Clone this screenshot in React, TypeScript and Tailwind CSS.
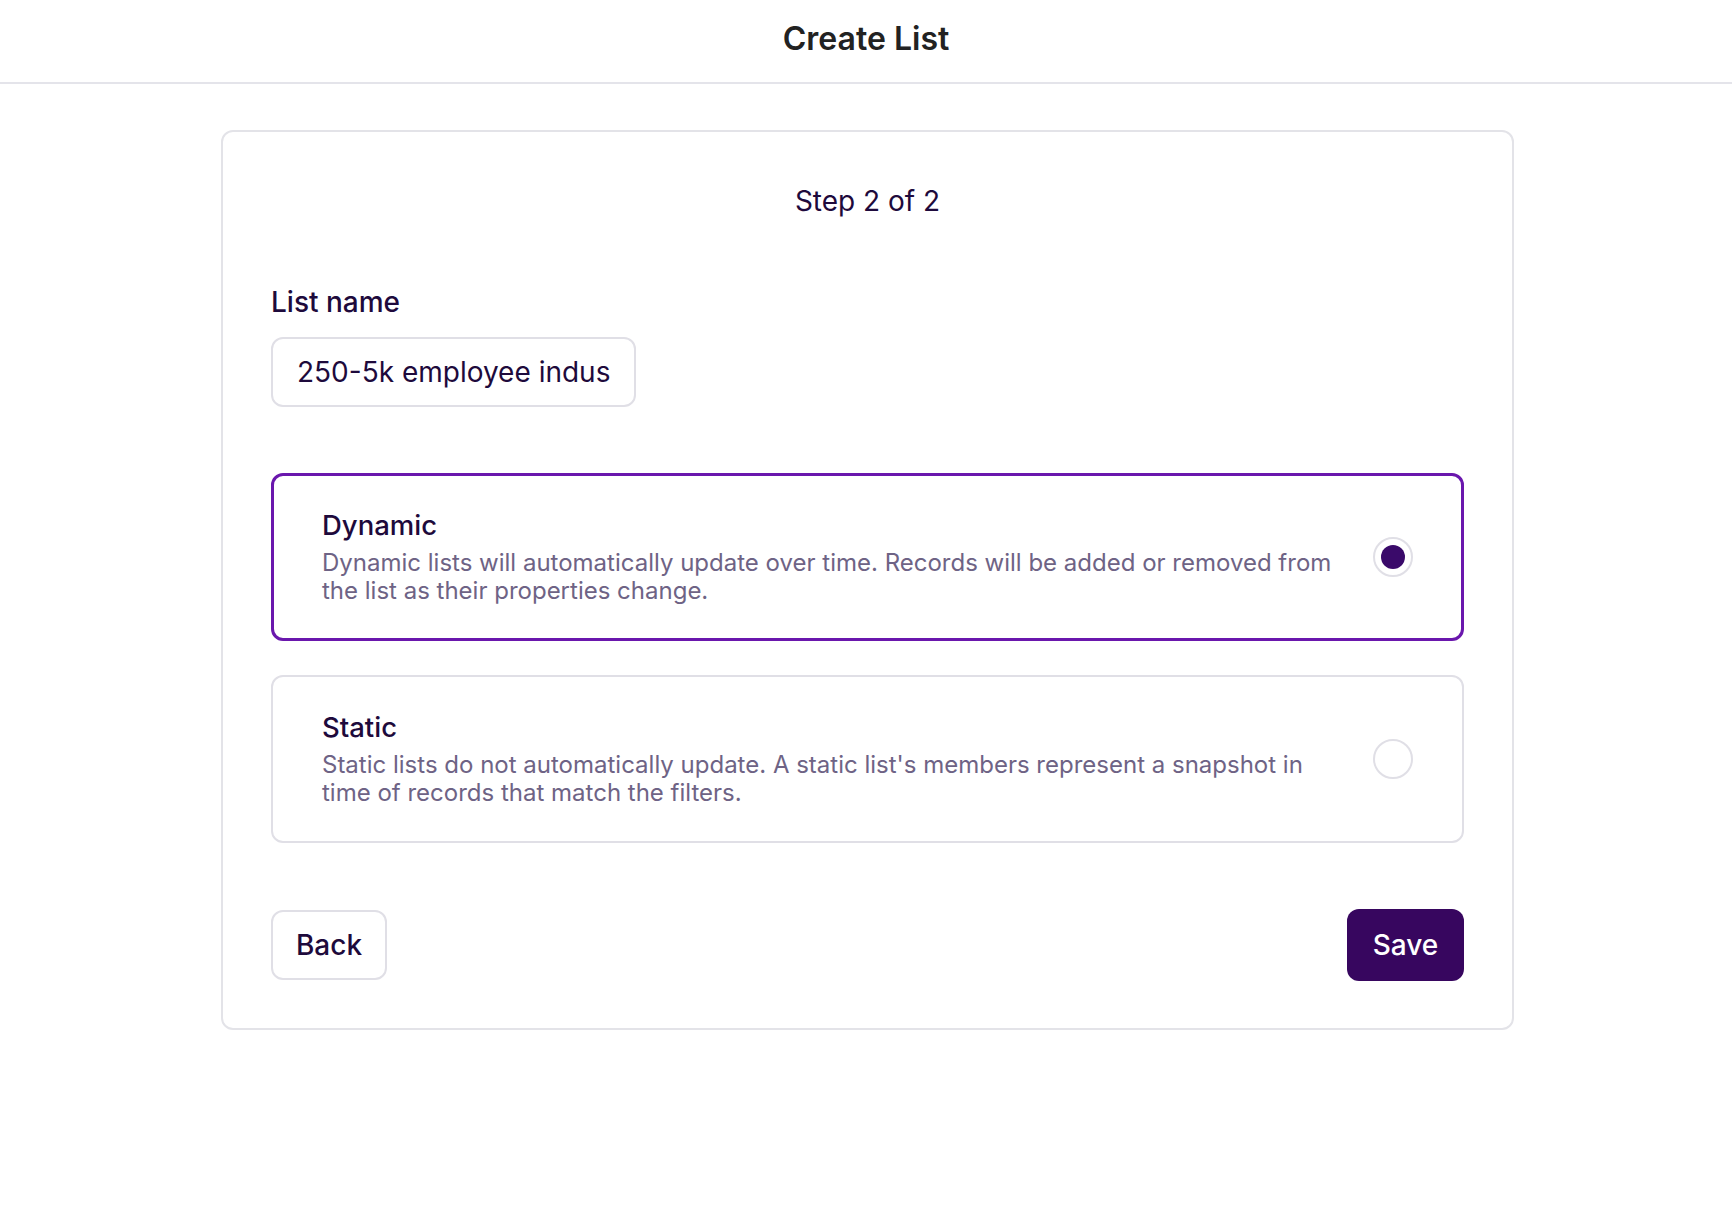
import React, { useState } from "react";

type ListKind = "dynamic" | "static";

const OPTIONS: { id: ListKind; title: string; body: string }[] = [
  {
    id: "dynamic",
    title: "Dynamic",
    body: "Dynamic lists will automatically update over time. Records will be added or removed from the list as their properties change.",
  },
  {
    id: "static",
    title: "Static",
    body: "Static lists do not automatically update. A static list's members represent a snapshot in time of records that match the filters.",
  },
];

function Radio({ checked }: { checked: boolean }) {
  return (
    <span className="flex h-[40px] w-[40px] shrink-0 items-center justify-center rounded-full border-2 border-[#e0dfe6] bg-white">
      {checked && <span className="h-[24px] w-[24px] rounded-full bg-[#3a0a6a]" />}
    </span>
  );
}

export default function App() {
  const [kind, setKind] = useState<ListKind>("dynamic");
  const [name, setName] = useState("250-5k employee industry list");

  return (
    <div
      className="min-h-[1210px] bg-white text-[#1e0a3c]"
      style={{ fontFamily: "Inter, 'Noto Sans', sans-serif" }}
    >
      <header className="box-border flex h-[84px] justify-center border-b-2 border-[#e4e4ea] pt-[19px]">
        <h1 className="text-[32px] font-semibold leading-[40px] text-[#222222]">Create List</h1>
      </header>

      <main className="ml-[221px] mt-[46px] box-border w-[1293px] rounded-[12px] border-2 border-[#e3e3e8] px-[48px] pb-[47px] pt-[53px]">
        <p className="text-center text-[28px] leading-[32px]">Step 2 of 2</p>

        <label className="mt-[69px] block text-[28px] font-medium leading-[32px]" htmlFor="list-name">
          List name
        </label>
        <input
          id="list-name"
          value={name}
          onChange={(e) => setName(e.target.value)}
          className="mt-[19px] box-border h-[70px] w-[365px] rounded-[12px] border-2 border-[#e0dfe6] px-[24px] text-[28px] text-[#1e0a3c] outline-none"
        />

        <div className="mt-[66px] flex flex-col gap-[34px]">
          {OPTIONS.map((opt) => {
            const active = kind === opt.id;
            return (
              <button
                key={opt.id}
                type="button"
                onClick={() => setKind(opt.id)}
                className={
                  active
                    ? "box-border flex items-center gap-[32px] rounded-[12px] border-[3px] border-[#6a17ad] py-[33px] pl-[48px] pr-[48px] text-left"
                    : "box-border flex items-center gap-[32px] rounded-[12px] border-2 border-[#e0dfe6] py-[34px] pl-[49px] pr-[49px] text-left"
                }
              >
                <span className="flex-1">
                  <span className="block text-[27.5px] font-medium leading-[32px] text-[#1e0a3c]">{opt.title}</span>
                  <span className="mt-[8px] block text-[24px] leading-[28px] text-[#6e6385]">{opt.body}</span>
                </span>
                <Radio checked={active} />
              </button>
            );
          })}
        </div>

        <div className="mt-[66px] flex items-center justify-between">
          <button
            type="button"
            className="box-border h-[70px] w-[116px] rounded-[12px] border-2 border-[#e0dfe6] text-[28px] font-medium text-[#1e0a3c]"
          >
            Back
          </button>
          <button
            type="button"
            className="h-[72px] w-[117px] rounded-[12px] bg-[#37065f] text-[28px] font-medium text-white"
          >
            Save
          </button>
        </div>
      </main>
    </div>
  );
}
